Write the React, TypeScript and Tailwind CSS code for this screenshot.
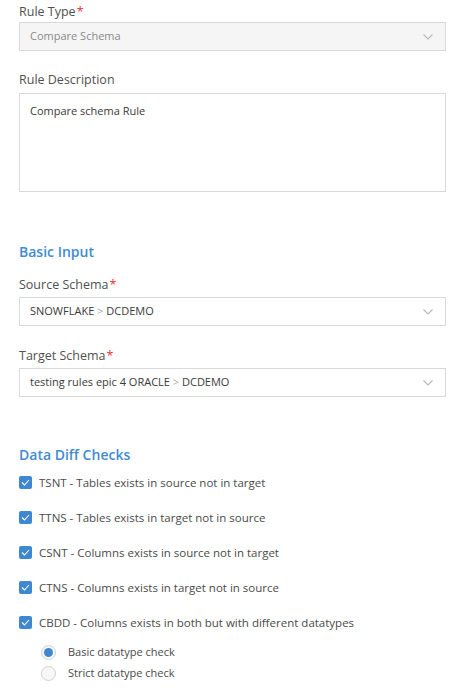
import React from "react";

const font = { fontFamily: '"Open Sans", "Liberation Sans", sans-serif' };

function Chevron() {
  return (
    <svg width="12" height="8" viewBox="0 0 12 8" className="shrink-0">
      <path d="M1.5 1.5 L6 6 L10.5 1.5" fill="none" stroke="#b8b8b8" strokeWidth="1.1" />
    </svg>
  );
}

function Label({ text, required }: { text: string; required?: boolean }) {
  return (
    <div className="text-[12.5px] leading-[16px] text-[#505050]">
      {text}
      {required && <span className="text-[#e53935] ml-[1px]">*</span>}
    </div>
  );
}

function Select({ children, disabled }: { children: React.ReactNode; disabled?: boolean }) {
  return (
    <div
      className={
        "flex items-center justify-between h-[29px] border border-[#d9d9d9] pl-[10px] pr-[11px] text-[11px] " +
        (disabled ? "bg-[#f5f5f5] text-[#8a8a8a]" : "bg-white text-[#3a3a3a]")
      }
    >
      <span>{children}</span>
      <Chevron />
    </div>
  );
}

function Crumb({ a, b }: { a: string; b: string }) {
  return (
    <>
      {a} <span className="text-[#aaa]">&gt;</span> {b}
    </>
  );
}

function Check({ text }: { text: string }) {
  return (
    <div className="flex items-center gap-[7px] h-[35px]">
      <span className="w-[13px] h-[13px] rounded-[2px] bg-[#3f87d0] flex items-center justify-center">
        <svg width="9" height="7" viewBox="0 0 9 7">
          <path d="M1 3.5 L3.5 6 L8 1" fill="none" stroke="white" strokeWidth="1.1" />
        </svg>
      </span>
      <span className="text-[11.5px] text-[#4a4a4a]">{text}</span>
    </div>
  );
}

function Radio({ text, on }: { text: string; on?: boolean }) {
  return (
    <div className="flex items-center gap-[12px] h-[21px]">
      <span className="w-[15px] h-[15px] rounded-full border border-[#d0d0d0] bg-[#f7f7f7] flex items-center justify-center">
        {on && <span className="w-[9px] h-[9px] rounded-full bg-[#3f87d0]" />}
      </span>
      <span className="text-[11px] text-[#4a4a4a]">{text}</span>
    </div>
  );
}

export default function App() {
  return (
    <div className="w-[473px] h-[697px] bg-white pl-[19px] pr-[27px] pt-[4px]" style={font}>
      <Label text="Rule Type" required />
      <div className="mt-[2px]">
        <Select disabled>Compare Schema</Select>
      </div>

      <div className="mt-[21px]">
        <Label text="Rule Description" />
      </div>
      <div className="mt-[5px] h-[99px] border border-[#d9d9d9] px-[10px] pt-[9px] text-[11px] text-[#3a3a3a]">
        Compare schema Rule
      </div>

      <div className="mt-[50px] text-[14px] font-semibold text-[#3f8ad6] leading-[20px]">Basic Input</div>

      <div className="mt-[15px]">
        <Label text="Source Schema" required />
      </div>
      <div className="mt-[4px]">
        <Select>
          <Crumb a="SNOWFLAKE" b="DCDEMO" />
        </Select>
      </div>

      <div className="mt-[22px]">
        <Label text="Target Schema" required />
      </div>
      <div className="mt-[4px]">
        <Select>
          <Crumb a="testing rules epic 4 ORACLE" b="DCDEMO" />
        </Select>
      </div>

      <div className="mt-[48px] text-[14px] font-semibold text-[#3f8ad6] leading-[20px]">Data Diff Checks</div>

      <div>
        <Check text="TSNT - Tables exists in source not in target" />
        <Check text="TTNS - Tables exists in target not in source" />
        <Check text="CSNT - Columns exists in source not in target" />
        <Check text="CTNS - Columns exists in target not in source" />
        <Check text="CBDD - Columns exists in both but with different datatypes" />
      </div>

      <div className="mt-[2px] pl-[22px]">
        <Radio text="Basic datatype check" on />
        <Radio text="Strict datatype check" />
      </div>
    </div>
  );
}
